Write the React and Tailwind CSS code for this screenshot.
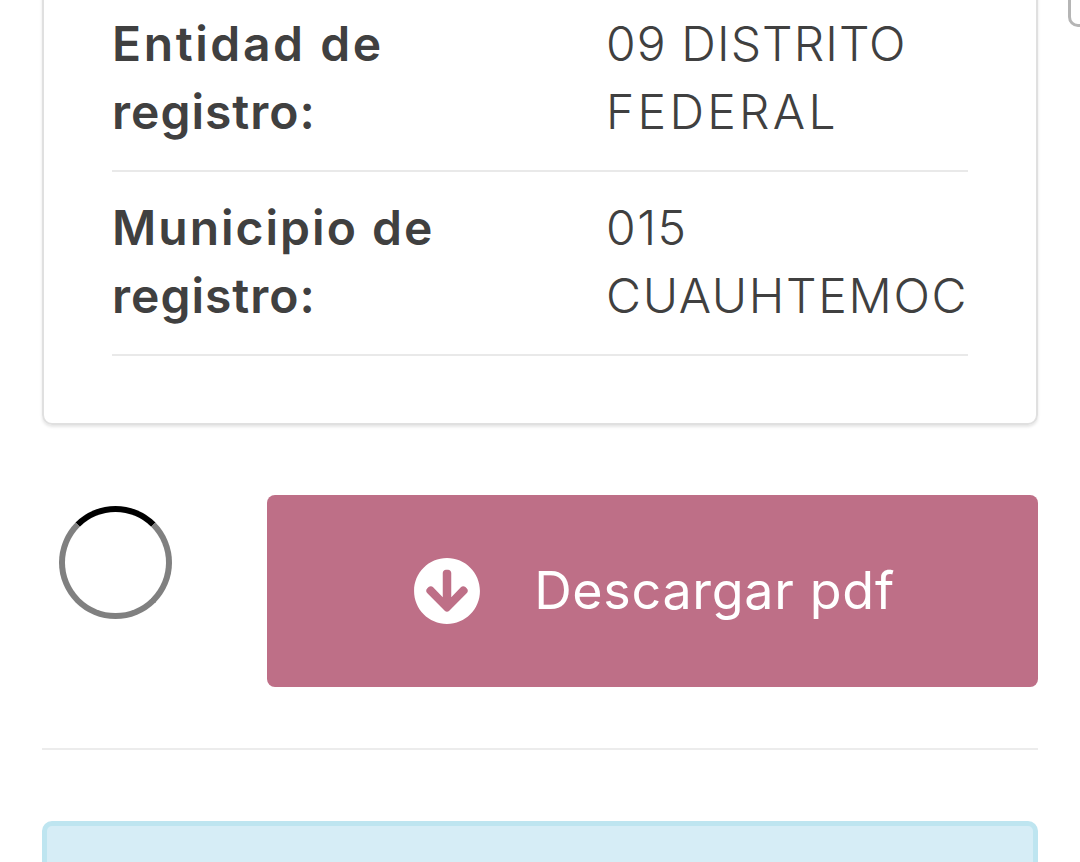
import { FaArrowCircleDown } from "react-icons/fa";

function Row({ label, value }) {
  return (
    <div className="flex border-b-2 border-[#e9e9e9] pt-[22px] pb-[24px] text-[48px] leading-[68px]">
      <div className="w-[494px] shrink-0 font-semibold">{label}</div>
      <div className="flex-1 font-light whitespace-nowrap">{value}</div>
    </div>
  );
}

export default function App() {
  return (
    <div className="relative h-[862px] w-[1080px] overflow-hidden bg-white px-[42px] text-[#404040] [font-family:Inter,'Liberation_Sans',sans-serif]">
      <div className="absolute -top-[20px] right-[-20px] h-[47px] w-[32px] rounded-[10px] border-[3px] border-[#b5b5b5]" />
      <div className="-mt-[14px] h-[439px] rounded-[10px] border-2 border-[#e0e0e0] px-[68px] shadow-[0_2px_3px_rgba(0,0,0,0.1)]">
        <Row
          label={<><span className="tracking-[2.6px]">Entidad de</span><br /><span className="tracking-[1px]">registro:</span></>}
          value={<><span className="tracking-[1.1px]">09 DISTRITO</span><br /><span className="tracking-[3.3px]">FEDERAL</span></>}
        />
        <Row
          label={<><span className="tracking-[2px]">Municipio de</span><br /><span className="tracking-[1px]">registro:</span></>}
          value={<><span className="tracking-[1.5px]">015</span><br /><span className="tracking-[1.7px]">CUAUHTEMOC</span></>}
        />
      </div>
      <div className="mt-[70px] flex">
        <div className="ml-[17px] mt-[11px] h-[113px] w-[113px] rounded-full border-[6px] border-[#808080] border-t-black" />
        <div className="ml-[95px] flex h-[192px] flex-1 items-center justify-center gap-[53px] rounded-[8px] bg-[#be6f87] pl-[3px] text-[52px] font-normal tracking-[0.7px] text-white">
          <FaArrowCircleDown className="h-[68px] w-[68px]" />
          <span>Descargar pdf</span>
        </div>
      </div>
      <div className="mt-[61px] h-[2px] bg-[#ececec]" />
      <div className="mt-[71px] h-[100px] rounded-[10px] border-[5px] border-[#bee5f0] bg-[#d6edf6]" />
    </div>
  );
}
